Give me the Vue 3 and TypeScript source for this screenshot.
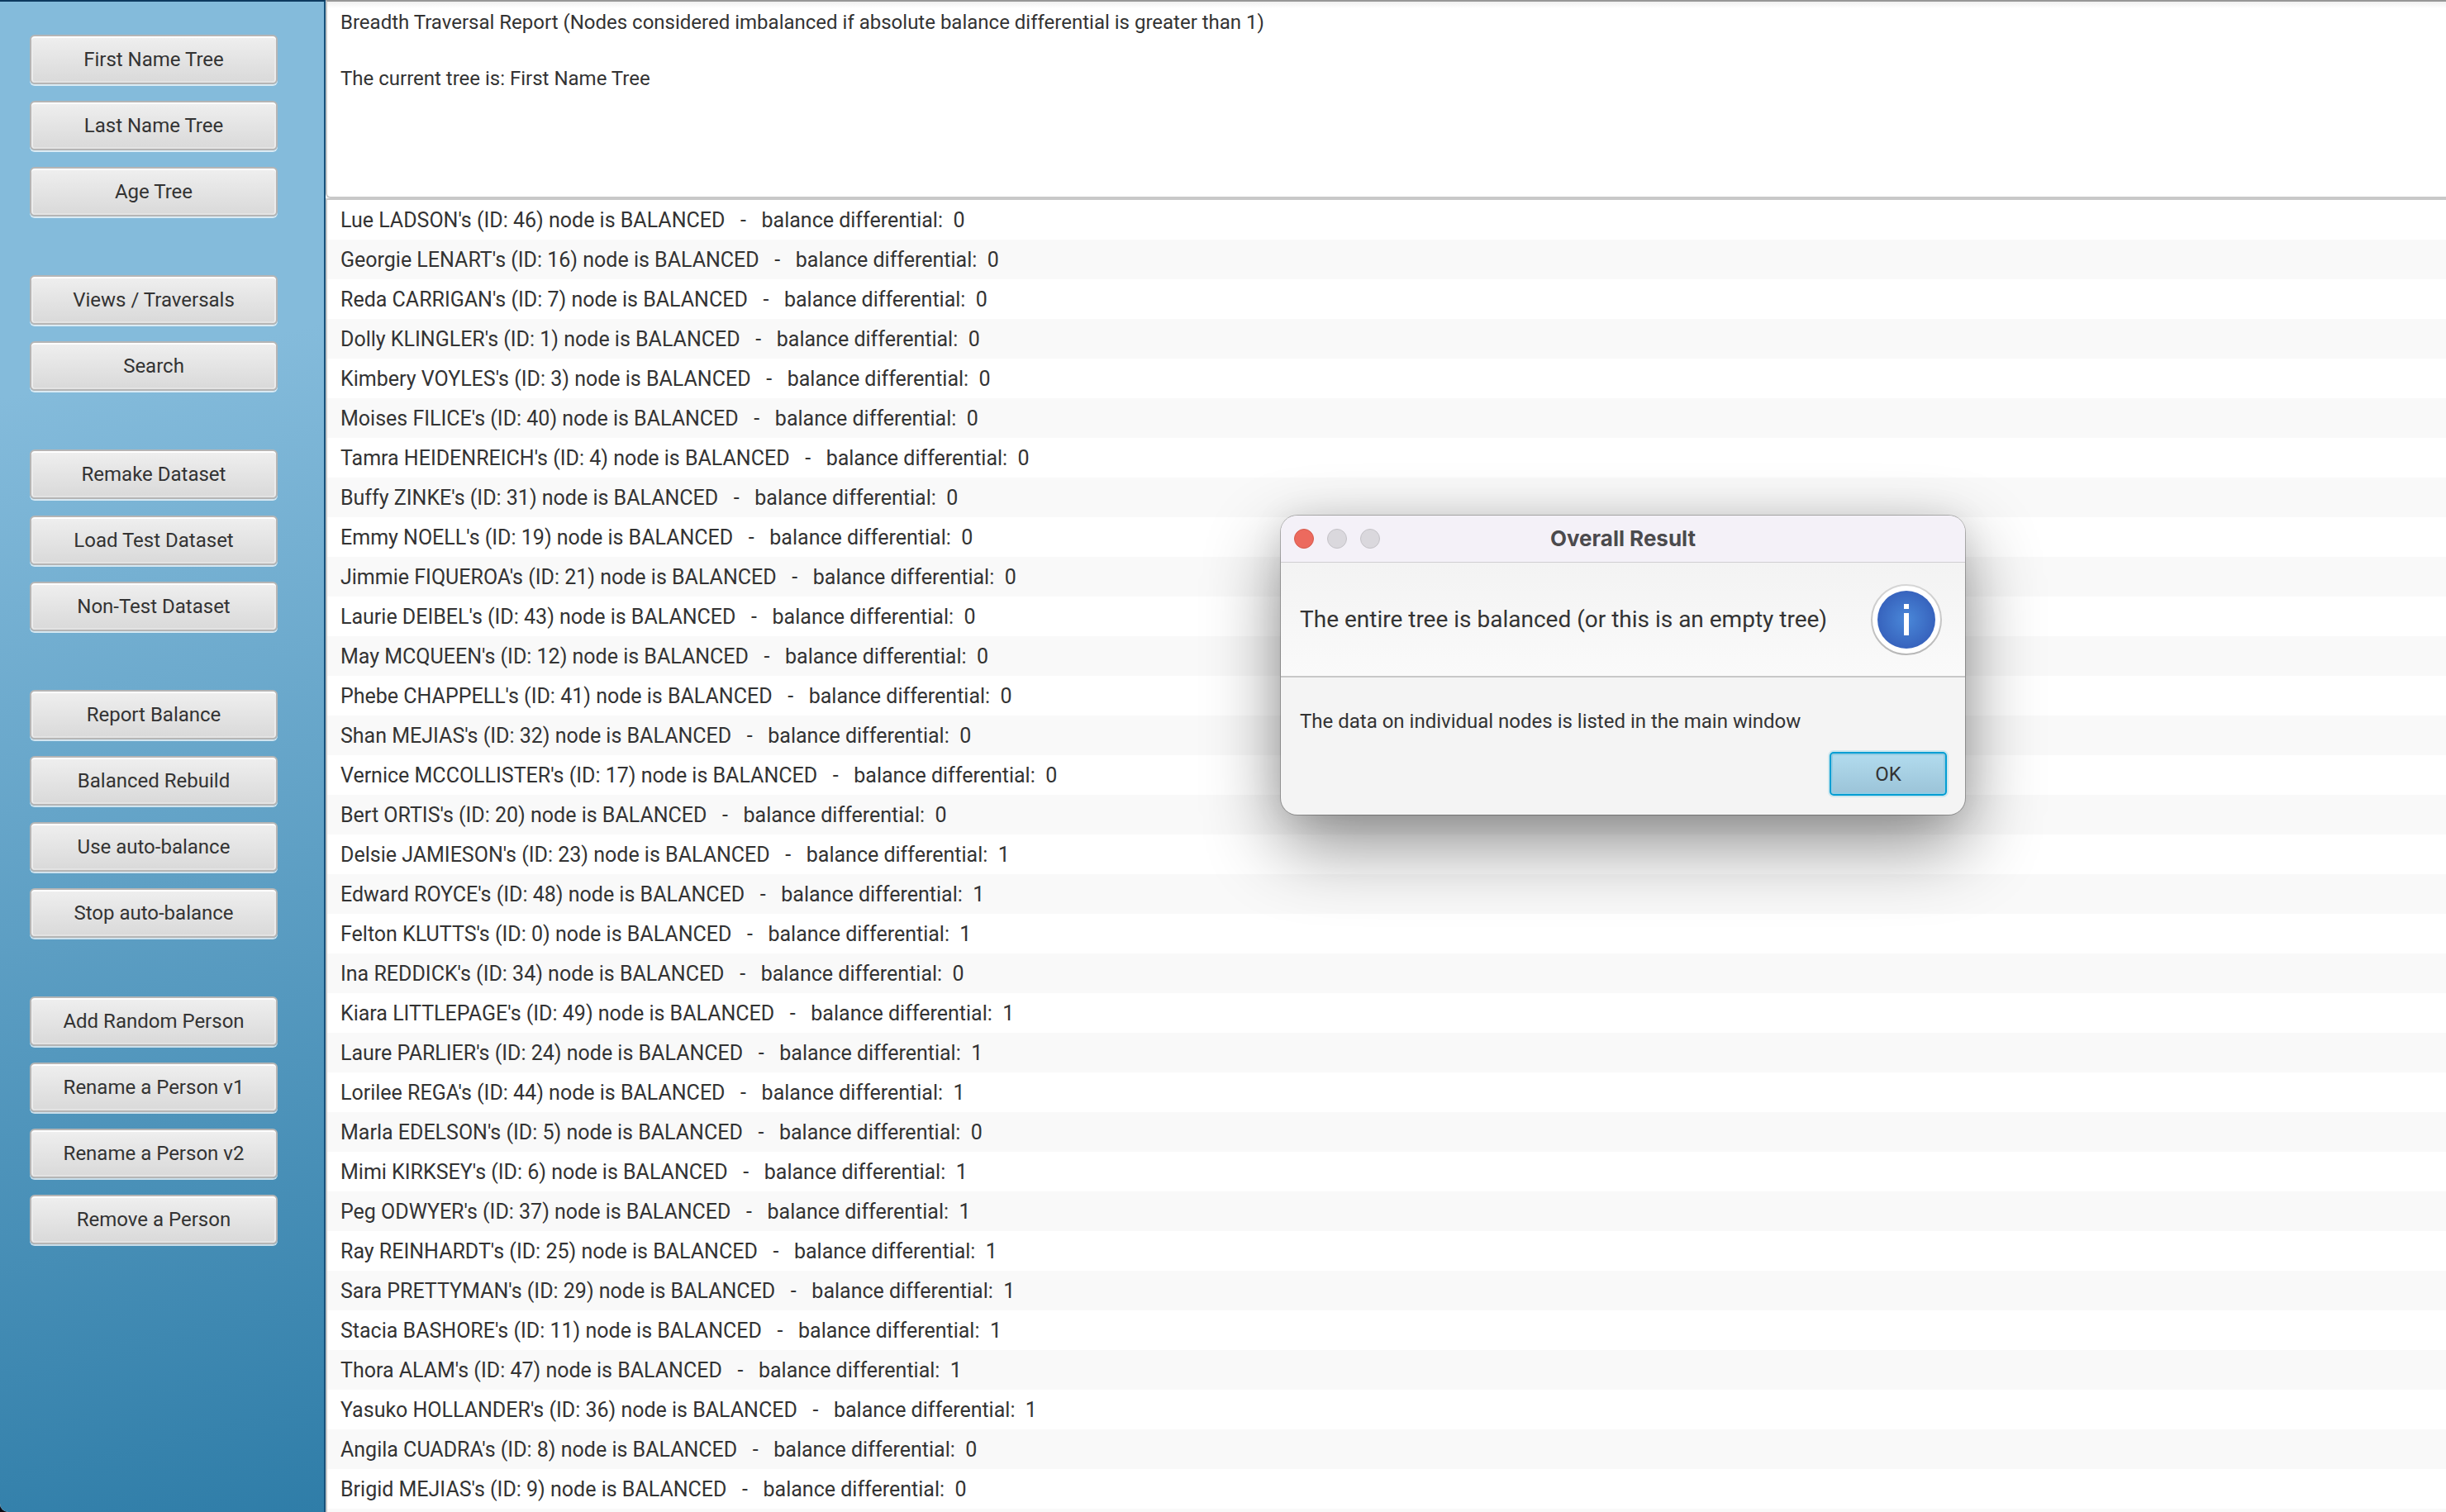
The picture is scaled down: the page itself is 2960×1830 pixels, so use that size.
<script setup lang="ts">
import { ref } from 'vue'

interface NodeRow {
  name: string
  id: number
  diff: number
}

const groups: string[][] = [
  ['First Name Tree', 'Last Name Tree', 'Age Tree'],
  ['Views / Traversals', 'Search'],
  ['Remake Dataset', 'Load Test Dataset', 'Non-Test Dataset'],
  ['Report Balance', 'Balanced Rebuild', 'Use auto-balance', 'Stop auto-balance'],
  ['Add Random Person', 'Rename a Person v1', 'Rename a Person v2', 'Remove a Person'],
]

const report =
  'Breadth Traversal Report (Nodes considered imbalanced if absolute balance differential is greater than 1)\n\nThe current tree is: First Name Tree'

const source: [string, number, number][] = [
  ['Lue LADSON', 46, 0],
  ['Georgie LENART', 16, 0],
  ['Reda CARRIGAN', 7, 0],
  ['Dolly KLINGLER', 1, 0],
  ['Kimbery VOYLES', 3, 0],
  ['Moises FILICE', 40, 0],
  ['Tamra HEIDENREICH', 4, 0],
  ['Buffy ZINKE', 31, 0],
  ['Emmy NOELL', 19, 0],
  ['Jimmie FIQUEROA', 21, 0],
  ['Laurie DEIBEL', 43, 0],
  ['May MCQUEEN', 12, 0],
  ['Phebe CHAPPELL', 41, 0],
  ['Shan MEJIAS', 32, 0],
  ['Vernice MCCOLLISTER', 17, 0],
  ['Bert ORTIS', 20, 0],
  ['Delsie JAMIESON', 23, 1],
  ['Edward ROYCE', 48, 1],
  ['Felton KLUTTS', 0, 1],
  ['Ina REDDICK', 34, 0],
  ['Kiara LITTLEPAGE', 49, 1],
  ['Laure PARLIER', 24, 1],
  ['Lorilee REGA', 44, 1],
  ['Marla EDELSON', 5, 0],
  ['Mimi KIRKSEY', 6, 1],
  ['Peg ODWYER', 37, 1],
  ['Ray REINHARDT', 25, 1],
  ['Sara PRETTYMAN', 29, 1],
  ['Stacia BASHORE', 11, 1],
  ['Thora ALAM', 47, 1],
  ['Yasuko HOLLANDER', 36, 1],
  ['Angila CUADRA', 8, 0],
  ['Brigid MEJIAS', 9, 0],
]
const rows: NodeRow[] = source.map(([name, id, diff]) => ({ name, id, diff }))

const describe = (r: NodeRow): string =>
  `${r.name}'s (ID: ${r.id}) node is BALANCED   -   balance differential:  ${r.diff}`

const dialogOpen = ref(true)
</script>

<template>
  <div class="window">
    <nav class="sidebar">
      <div v-for="(group, i) in groups" :key="i" class="group">
        <button v-for="label in group" :key="label" type="button" class="btn">{{ label }}</button>
      </div>
    </nav>

    <main class="content">
      <textarea class="report" readonly aria-label="Report summary" :value="report"></textarea>
      <ul class="list">
        <li v-for="r in rows" :key="r.id" class="row">{{ describe(r) }}</li>
      </ul>
    </main>

    <section v-if="dialogOpen" class="dialog" role="dialog" aria-labelledby="dialog-title">
      <header class="titlebar">
        <div class="lights">
          <button type="button" class="light close" aria-label="Close" @click="dialogOpen = false"></button>
          <button type="button" class="light" aria-label="Minimize" disabled></button>
          <button type="button" class="light" aria-label="Zoom" disabled></button>
        </div>
        <h1 id="dialog-title" class="title">Overall Result</h1>
      </header>
      <div class="banner">
        <p class="headline">The entire tree is balanced (or this is an empty tree)</p>
        <svg class="info" viewBox="0 0 88 88" aria-hidden="true">
          <defs>
            <radialGradient id="info-fill">
              <stop offset="0" stop-color="#4a88d9" />
              <stop offset="1" stop-color="#3763bd" />
            </radialGradient>
            <linearGradient id="info-ring" x1="0" y1="0" x2="0" y2="1">
              <stop offset="0" stop-color="#d6d6d6" />
              <stop offset="1" stop-color="#b8b8b8" />
            </linearGradient>
          </defs>
          <circle cx="44" cy="44" r="42" fill="#fff" stroke="url(#info-ring)" stroke-width="2" />
          <circle cx="44" cy="44" r="35" fill="url(#info-fill)" />
          <rect x="41" y="25" width="6" height="6" fill="#fff" />
          <rect x="41" y="36" width="6" height="27" fill="#fff" />
        </svg>
      </div>
      <p class="detail">The data on individual nodes is listed in the main window</p>
      <footer class="actions">
        <button type="button" class="ok" @click="dialogOpen = false">OK</button>
      </footer>
    </section>
  </div>
</template>

<style>
body {
  margin: 0;
  background: #0b0b14;
}
</style>

<style scoped>
.window {
  position: relative;
  display: flex;
  height: 100vh;
  overflow: hidden;
  border-bottom-left-radius: 10px;
  background: #fff;
  color: #333;
  font-family: Roboto, Inter, "Liberation Sans", sans-serif;
  font-size: 24px;
}

.sidebar {
  box-sizing: border-box;
  flex: none;
  display: flex;
  flex-direction: column;
  gap: 71px;
  width: 394px;
  padding: 40px 56px 0 36px;
  border-top: 2px solid #0d3a5f;
  border-right: 2px solid #17517a;
  background: linear-gradient(167deg, #84bbdb 25%, #2f7da8 100%);
}

.group {
  display: flex;
  flex-direction: column;
  gap: 20px;
}

.btn {
  height: 60px;
  padding: 0;
  border: 2px solid #b5b5b5;
  border-radius: 6px;
  background: linear-gradient(#efefef, #d9d9d9);
  box-shadow: 0 2px 0 rgba(255, 255, 255, 0.7), inset 0 2px 0 #fff, inset 2px 0 0 #ececec,
    inset -2px 0 0 #ececec, inset 0 -2px 0 #e3e3e3;
  color: #333;
  font: inherit;
}

.content {
  flex: 1;
  min-width: 0;
  display: flex;
  flex-direction: column;
}

.report {
  box-sizing: border-box;
  flex: none;
  width: 100%;
  height: 240px;
  margin: 0;
  padding: 8px 16px;
  border: 2px solid #c8c8c8;
  border-top-color: #979797;
  border-right: 0;
  border-radius: 0 0 0 6px;
  outline: 0;
  resize: none;
  background: linear-gradient(#f0f0f0, #fff 8px);
  color: #333;
  font: inherit;
  line-height: 34px;
}

.list {
  flex: 1;
  min-height: 0;
  margin: 0;
  padding: 0;
  overflow: hidden;
  list-style: none;
  border: solid #c8c8c8;
  border-width: 2px 0 0 2px;
  background: repeating-linear-gradient(#fff 0 48px, #f9f9f9 48px 96px);
  font-size: 25px;
}

.row {
  height: 48px;
  padding-left: 16px;
  line-height: 50px;
  white-space: pre;
}

.dialog {
  position: absolute;
  top: 624px;
  left: 1550px;
  width: 828px;
  border-radius: 20px;
  background: #f4f4f4;
  box-shadow: 0 0 0 1px rgba(0, 0, 0, 0.25), 0 36px 90px rgba(0, 0, 0, 0.45),
    0 0 40px rgba(0, 0, 0, 0.08);
}

.titlebar {
  display: grid;
  grid-template-columns: 1fr auto 1fr;
  align-items: center;
  height: 56px;
  padding: 0 16px;
  border-bottom: 1px solid #d0ced2;
  border-radius: 20px 20px 0 0;
  background: #f4f1f8;
}

.lights {
  display: flex;
  gap: 16px;
}

.light {
  width: 24px;
  height: 24px;
  padding: 0;
  border: 1px solid #c4c2c7;
  border-radius: 50%;
  background: #dad8dd;
}

.close {
  border-color: #d65a4c;
  background: #ec6a5e;
}

.title {
  margin: 0;
  color: #4b4a4d;
  font-family: Inter, Roboto, sans-serif;
  font-size: 26px;
  font-weight: 700;
  line-height: 32px;
}

.banner {
  display: flex;
  align-items: center;
  justify-content: space-between;
  height: 137px;
  padding: 0 27px 0 23px;
  border-bottom: 2px solid #c8c8c8;
  background: linear-gradient(#f3f3f3, #fafafa);
}

.headline {
  margin: 0;
  font-size: 28px;
  line-height: 36px;
}

.info {
  width: 88px;
  height: 88px;
}

.detail {
  margin: 0;
  padding: 36px 23px 20px;
  line-height: 34px;
}

.actions {
  display: flex;
  justify-content: flex-end;
  padding: 0 22px 23px;
}

.ok {
  width: 142px;
  height: 53px;
  padding: 0;
  border: 2px solid #039ed3;
  border-radius: 5px;
  background: linear-gradient(#b2dcee, #9bc3d8);
  box-shadow: 0 0 0 2px rgba(3, 158, 211, 0.15), inset 0 0 0 2px #93cbe2;
  color: #333;
  font: inherit;
}
</style>
